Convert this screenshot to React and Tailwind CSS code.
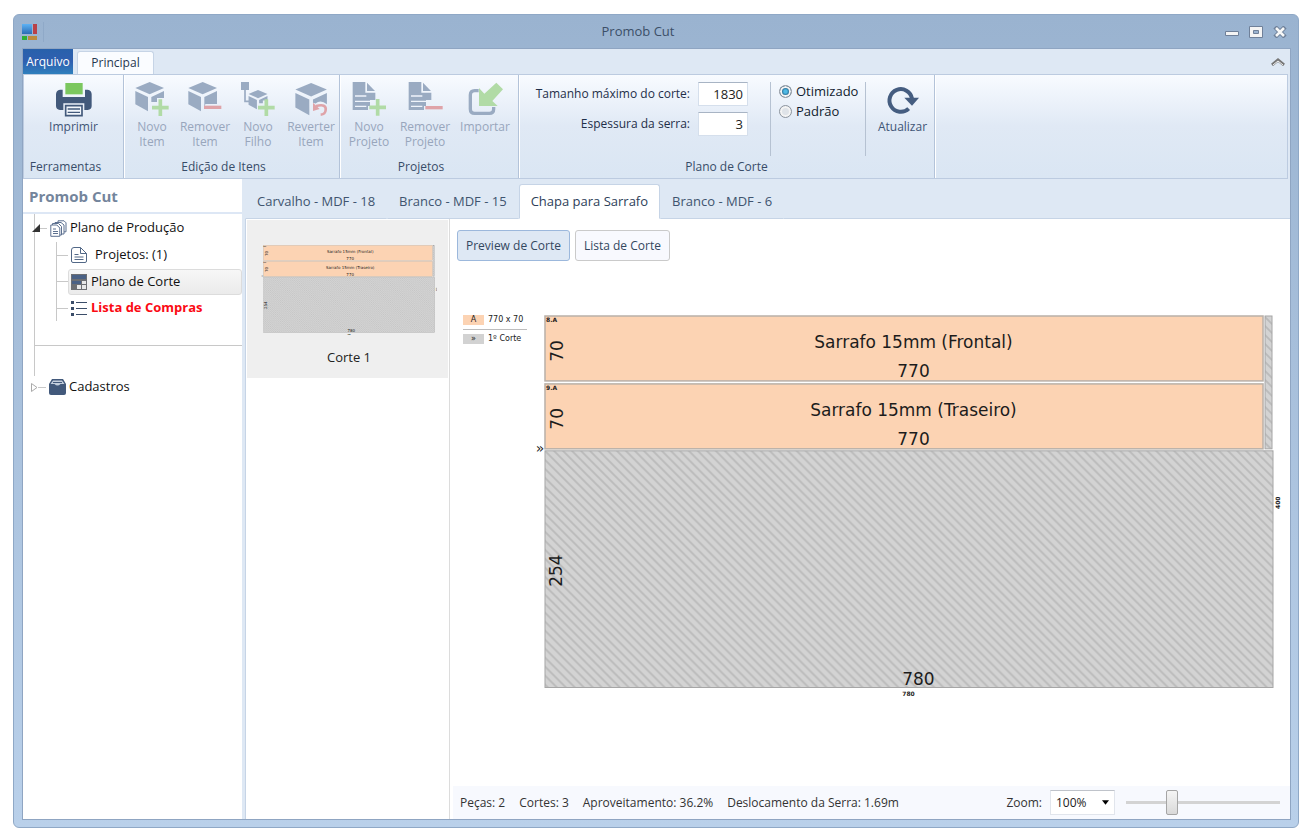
import { useId, useState } from "react";

function Plus({ x, y, size = 50 }) {
  const r = size / 2;
  return (
    <path
      d={`M${x - r} ${y}h${size}M${x} ${y - r}v${size}`}
      stroke="#b1dba6"
      strokeWidth="11"
      fill="none"
    />
  );
}

function Cube({ x = 0, y = 0, scale = 1, cut }) {
  return (
    <g transform={`translate(${x} ${y}) scale(${scale})`} fill="#9aabc2">
      <path d="M44 0 87 18 44 37 1 18Z" />
      <path d="M1 27 39 45V88L1 67Z" />
      <path d={cut || "M49 45 87 27V48H66V60H49Z"} />
    </g>
  );
}

function Icon({ children, className = "h-[35px] w-[35px]", viewBox = "0 0 105 105" }) {
  return (
    <svg className={`shrink-0 ${className}`} viewBox={viewBox} aria-hidden="true">
      {children}
    </svg>
  );
}

const PrintIcon = () => (
  <Icon className="h-[35px] w-9" viewBox="0 0 108 105">
    <path d="M12 23h8v22h67V23h8q12 2 12 14v35q0 11-12 12H85V64H22v20H12Q0 83 0 72V37Q0 25 12 23Z" fill="#42597b" />
    <path d="M28 3h52v34H28Z" fill="#7bc75f" />
    <path d="M29 71h49v30H29Z" fill="#f3f7fc" stroke="#42597b" strokeWidth="5" />
    <path d="M35 81h37M35 91h37" stroke="#42597b" strokeWidth="4" />
  </Icon>
);

const NewItemIcon = () => (
  <Icon>
    <Cube />
    <Plus x={76} y={77} />
  </Icon>
);

const RemoveItemIcon = () => (
  <Icon>
    <Cube cut="M49 45 87 27V66H52L49 80Z" />
    <path d="M48 76h52" stroke="#dfa3a8" strokeWidth="10" />
  </Icon>
);

const NewChildIcon = () => (
  <Icon>
    <path d="M0 0h24v24H0Z" fill="#9aabc2" />
    <path d="M12 20v38h12" stroke="#9aabc2" strokeWidth="5" fill="none" />
    <Cube x={22} y={24} scale={0.66} />
    <Plus x={76} y={77} />
  </Icon>
);

const RevertItemIcon = () => (
  <Icon>
    <Cube x={3} y={3} scale={1.1} cut="M49 45 87 27V58Q70 44 56 56L49 54Z" />
    <path d="M66 72Q98 64 95 84 94 97 80 98" stroke="#dfa3a8" strokeWidth="8" fill="none" />
    <path d="M57 62v25l20-6Z" fill="#dfa3a8" />
  </Icon>
);

const Sheet = () => (
  <>
    <path d="M2 0h38v32h30v22H54v18H48v12H2Z" fill="#9aabc2" />
    <path d="M45 2 69 27H45Z" fill="#9aabc2" />
    <path d="M9 42h34M9 58h50M9 73h34" stroke="#eff4fb" strokeWidth="4" />
  </>
);

const NewProjectIcon = () => (
  <Icon>
    <Sheet />
    <Plus x={77} y={76} />
  </Icon>
);

const RemoveProjectIcon = () => (
  <Icon>
    <Sheet />
    <path d="M52 77h52" stroke="#dfa3a8" strokeWidth="10" />
  </Icon>
);

const ImportIcon = () => (
  <Icon>
    <path d="M32 26H20Q7 26 7 39v42q0 13 13 13h44q13 0 13-13v-6" stroke="#9aabc2" strokeWidth="10" fill="none" />
    <path d="M33 18v54h56L73 57l32-35L85 2 49 35Z" fill="#b1dba6" />
  </Icon>
);

const RefreshIcon = () => (
  <Icon>
    <path d="M71 80A34 34 0 1 1 81 50" stroke="#455d80" strokeWidth="12" fill="none" />
    <path d="M58 47h44L81 71Z" fill="#455d80" />
  </Icon>
);

function RibbonButton({ icon, label, disabled, width }) {
  return (
    <button
      type="button"
      disabled={disabled}
      className={`flex flex-col items-center gap-[2px] text-[12px] leading-[15px] ${width} ${
        disabled ? "text-[#98a6bc]" : "text-[#3f5575]"
      }`}
    >
      {icon}
      <span>{label}</span>
    </button>
  );
}

function RibbonGroup({ title, titleClass = "pr-4", width, children }) {
  return (
    <section className={`flex flex-col border-r border-[#b3c3d9] shadow-[1px_0_0_#fff] ${width}`}>
      <div className="flex flex-1 justify-center pt-[7px]">{children}</div>
      <h2 className={`pb-[2px] text-center text-[12px] leading-[18px] text-[#384c68] ${titleClass}`}>{title}</h2>
    </section>
  );
}

function Ribbon() {
  const [mode, setMode] = useState("otimizado");

  return (
    <div className="mr-[2px] flex h-[105px] border border-[#bccbe0] bg-linear-to-b from-[#f8fbff] via-[#e0e9f5] to-[#dae6f3]">
      <RibbonGroup title="Ferramentas" width="w-[100px]">
        <RibbonButton icon={<PrintIcon />} label="Imprimir" width="w-16" />
      </RibbonGroup>
      <RibbonGroup title="Edição de Itens" width="w-[216px]">
        <RibbonButton disabled icon={<NewItemIcon />} label={<>Novo<br />Item</>} width="w-[53px]" />
        <RibbonButton disabled icon={<RemoveItemIcon />} label={<>Remover<br />Item</>} width="w-[53px]" />
        <RibbonButton disabled icon={<NewChildIcon />} label={<>Novo<br />Filho</>} width="w-[53px]" />
        <RibbonButton disabled icon={<RevertItemIcon />} label={<>Reverter<br />Item</>} width="w-[53px]" />
      </RibbonGroup>
      <RibbonGroup title="Projetos" width="w-[179px]">
        <RibbonButton disabled icon={<NewProjectIcon />} label={<>Novo<br />Projeto</>} width="w-14" />
        <RibbonButton disabled icon={<RemoveProjectIcon />} label={<>Remover<br />Projeto</>} width="w-14" />
        <RibbonButton disabled icon={<ImportIcon />} label="Importar" width="w-16" />
      </RibbonGroup>
      <RibbonGroup title="Plano de Corte" titleClass="" width="w-[416px]">
        <div className="grid flex-1 grid-cols-[1fr_50px] content-start items-center gap-x-2 gap-y-[6px] text-right text-[#1f2f49]">
          <label htmlFor="max-cut" className="text-[12px] whitespace-nowrap">Tamanho máximo do corte:</label>
          <input id="max-cut" defaultValue="1830" className="h-6 border border-[#d5dfec] border-t-[#a8b4c4] bg-white px-1 text-right text-[#222]" />
          <label htmlFor="saw" className="text-[12px] whitespace-nowrap">Espessura da serra:</label>
          <input id="saw" defaultValue="3" className="h-6 border border-[#d5dfec] border-t-[#a8b4c4] bg-white px-1 text-right text-[#222]" />
        </div>
        <fieldset className="ml-[22px] flex h-[74px] w-[96px] flex-col gap-[2px] border-x border-[#b6c2d2] pl-2 text-[#111c2e]">
          {["Otimizado", "Padrão"].map((name) => {
            const value = name.toLowerCase();
            return (
              <label key={value} className="flex items-center gap-1 leading-[18px]">
                <input
                  type="radio"
                  name="mode"
                  checked={mode === value}
                  onChange={() => setMode(value)}
                  className="h-[13px] w-[13px] shrink-0 appearance-none rounded-full border border-[#8d959f] bg-[#dfe3e8] shadow-[inset_0_0_0_2px_#f4f4f4] checked:bg-radial checked:from-[#4fb9e4] checked:from-20% checked:to-[#174a70] checked:to-60%"
                />
                {name}
              </label>
            );
          })}
        </fieldset>
        <RibbonButton icon={<RefreshIcon />} label="Atualizar" width="w-[68px] pl-[5px]" />
      </RibbonGroup>
    </div>
  );
}

function TitleBar() {
  return (
    <header className="flex h-[33px] items-center px-2 text-[#3c4f68]">
      <div className="flex flex-1 items-center gap-[5px]">
        <svg className="h-4 w-4" viewBox="0 0 16 16" aria-hidden="true">
          <defs>
            <linearGradient id="logo" x2="0" y2="1">
              <stop stopColor="#5db2f5" />
              <stop offset="1" stopColor="#2b6cb4" />
            </linearGradient>
          </defs>
          <path d="M0 0h10v10H0Z" fill="url(#logo)" />
          <path d="M11 0h4v10h-4Z" fill="#b94148" />
          <path d="M0 12h5v4H0Z" fill="#2fae37" />
          <path d="M6 12h9v4H6Z" fill="#bd8a3c" />
        </svg>
        <span className="h-5 w-px bg-[#8fa9c8]" />
      </div>
      <h1 className="mr-9">Promob Cut</h1>
      <div className="flex flex-1 items-center justify-end gap-[10px]">
        <button type="button" aria-label="Minimizar">
          <svg className="h-3 w-[14px]" viewBox="0 0 14 12">
            <path d="M.5 5.500h13v4H.5Z" fill="#f4f4f4" stroke="#6f8099" />
          </svg>
        </button>
        <button type="button" aria-label="Maximizar">
          <svg className="h-3 w-[14px]" viewBox="0 0 14 12">
            <path d="M.5.5h13v11H.5Z" fill="#f4f4f4" stroke="#6f8099" />
            <path d="M4.500 4.500h5v3h-5Z" fill="#9ab3d0" stroke="#6f8099" />
          </svg>
        </button>
        <button type="button" aria-label="Fechar" className="mr-[3px]">
          <svg className="h-3 w-[14px]" viewBox="0 0 14 12">
            <path d="m2 1 10 10M12 1 2 11" stroke="#6f8099" strokeWidth="4.500" />
            <path d="m3 2 8 8M11 2 3 10" stroke="#f7f7f7" strokeWidth="2.500" />
          </svg>
        </button>
      </div>
    </header>
  );
}

function SideTree() {
  return (
    <aside className="flex w-[219px] shrink-0 flex-col bg-white text-[#111]">
      <h2 className="border-b-2 border-[#dde7f5] pt-[4px] pb-[3px] pl-[6px] text-[15px] leading-[26px] font-bold text-[#74859c]">
        Promob Cut
      </h2>
      <nav className="pl-[11px]">
        <ul className="border-l border-[#c8c8c8]">
          <li>
            <a href="#producao" className="-ml-[3px] flex h-7 items-center">
              <svg className="h-2 w-2" viewBox="0 0 8 8" aria-hidden="true">
                <path d="M8 0v8H0Z" fill="#333" />
              </svg>
              <span className="w-[7px] border-t border-[#c8c8c8]" />
              <svg className="mx-[3px] h-[17px] w-[17px]" viewBox="0 0 17 17" fill="#fff" stroke="#5d7190" aria-hidden="true">
                <path d="M8 .8h6l2 2v9H8Z" />
                <path d="M5 2.500h6l3 2.500v9H5Z" />
                <path d="M2.500 3.500h6l3 3v8.500h-9Z" />
                <path d="M.8 5h6l3 3v8.300h-9ZM3 9h3M3 11.500h5M3 13.500h5" />
              </svg>
              Plano de Produção
            </a>
            <ul className="ml-[21px] border-l border-[#c8c8c8]">
              <li className="flex h-[26px] items-center">
                <span className="w-[11px] border-t border-[#c8c8c8]" />
                <a href="#projetos" className="flex flex-1 items-center gap-2 pl-[3px]">
                  <svg className="h-4 w-4" viewBox="0 0 16 16" fill="none" stroke="#526887" aria-hidden="true">
                    <path d="M3 .5h6.500l6 6V14q0 1.500-1.500 1.500H2Q.5 15.500.5 14V3Q.5.5 3 .5ZM9.500.5v6h6M3.500 7.500h4M3.500 10h9M3.500 12.500h9" />
                  </svg>
                  Projetos: (1)
                </a>
              </li>
              <li className="flex h-[27px] items-center">
                <span className="w-[11px] border-t border-[#c8c8c8]" />
                <a
                  href="#plano"
                  aria-current="page"
                  className="flex h-[26px] flex-1 items-center gap-1 rounded-[3px] border border-[#dcdcdc] bg-linear-to-b from-[#f7f7f7] to-[#ebebeb] pl-[2px]"
                >
                  <svg className="h-4 w-4" viewBox="0 0 16 16" aria-hidden="true">
                    <path d="M0 0h16v16H0Z" fill="#6d6f73" />
                    <path d="M1 1h14v4H1ZM1 7h9v3H1Z" fill="#4a6185" />
                    <path d="M11 7h4v3h-4ZM6 11h4v4H6ZM11 11h4v4h-4Z" fill="#e8e8e8" />
                  </svg>
                  Plano de Corte
                </a>
              </li>
              <li className="flex h-[26px] items-center">
                <span className="w-[11px] border-t border-[#c8c8c8]" />
                <a href="#compras" className="flex flex-1 items-center gap-1 pl-[3px] font-bold text-[#fb0a14]">
                  <svg className="h-4 w-4" viewBox="0 0 16 16" aria-hidden="true">
                    <path d="M0 1h3v3H0ZM0 7h3v3H0ZM0 13h3v3H0Z" fill="#3b4d69" />
                    <path d="M5 2.500h11M5 8.500h11M5 14.500h11" stroke="#3b4d69" />
                  </svg>
                  Lista de Compras
                </a>
              </li>
            </ul>
          </li>
          <li className="mt-[24px] h-[31px] border-t border-[#c8c8c8]" />
        </ul>
        <a href="#cadastros" className="-ml-[3px] flex h-[22px] items-center">
          <svg className="h-[9px] w-[7px]" viewBox="0 0 7 9" aria-hidden="true">
            <path d="M.5.5 6 4.500.5 8.500Z" fill="#fff" stroke="#aaa" />
          </svg>
          <span className="w-2 border-t border-[#c8c8c8]" />
          <svg className="mx-[3px] h-4 w-[17px]" viewBox="0 0 17 16" aria-hidden="true">
            <path d="M3 0h11l3 5v9q0 2-2 2H2q-2 0-2-2V5Z" fill="#42597b" />
            <path d="M4 1.500h9l2.500 3.500h-4q-3 3-6 0h-4Z" fill="#c3cedd" />
            <path d="M4 3.500h9" stroke="#42597b" />
          </svg>
          Cadastros
        </a>
      </nav>
    </aside>
  );
}

const strips = [
  { tag: "8.A", name: "Sarrafo 15mm (Frontal)", y: 1 },
  { tag: "9.A", name: "Sarrafo 15mm (Traseiro)", y: 69 },
];

function CutPlan({ className }) {
  const hatch = useId();

  return (
    <svg
      className={className}
      viewBox="0 0 748 385"
      fontFamily="'DejaVu Sans', Verdana, sans-serif"
      fontSize="17"
      fill="#1c1c1c"
      textAnchor="middle"
    >
      <defs>
        <pattern id={hatch} width="9" height="9" patternUnits="userSpaceOnUse">
          <path d="M0 0h9v9H0Z" fill="#d3d3d3" />
          <path d="M-1-1 10 10M-1 8 1 10M8-1 10 1" stroke="#bababa" strokeWidth="1.800" />
        </pattern>
      </defs>
      {strips.map(({ tag, name, y }) => (
        <g key={tag} transform={`translate(0 ${y})`}>
          <rect x="10" y="0" width="719" height="65" fill="#fcd3b3" stroke="#b9b0a8" strokeWidth="1.500" />
          <text x="11" y="6" fontSize="6" fontWeight="bold" textAnchor="start">{tag}</text>
          <text x="379" y="32">{name}</text>
          <text x="379" y="61">770</text>
          <text transform="translate(28 35) rotate(-90)">70</text>
        </g>
      ))}
      <rect x="731" y="1" width="7" height="133" fill={`url(#${hatch})`} stroke="#a6a6a6" />
      <rect x="10" y="136" width="729" height="237" fill={`url(#${hatch})`} stroke="#a6a6a6" />
      <text x="384" y="370">780</text>
      <text transform="translate(27 256) rotate(-90)">254</text>
      <text x="374" y="382" fontSize="6" fontWeight="bold">780</text>
      <text transform="translate(746 188) rotate(-90)" fontSize="6" fontWeight="bold">400</text>
      <text x="5" y="138" fontSize="14">»</text>
    </svg>
  );
}

function Legend() {
  return (
    <dl className="grid w-16 shrink-0 grid-cols-[21px_1fr] items-center gap-x-1 font-['DejaVu_Sans',Verdana,sans-serif] text-[8px] leading-[10px] whitespace-nowrap text-[#222]">
      <dt className="bg-[#fcd3b3] text-center">A</dt>
      <dd>770 x 70</dd>
      <div className="col-span-2 my-1 border-t border-[#bdbdbd]" />
      <dt className="bg-[#d2d2d2] text-center">»</dt>
      <dd>1º Corte</dd>
    </dl>
  );
}

function StatusBar() {
  return (
    <footer className="flex h-[33px] items-center gap-[14px] bg-[#f7f9fe] pr-[10px] pl-[7px] text-[12px] whitespace-nowrap text-[#333]">
      <span>Peças: 2</span>
      <span>Cortes: 3</span>
      <span>Aproveitamento: 36.2%</span>
      <span>Deslocamento da Serra: 1.69m</span>
      <label htmlFor="zoom" className="ml-auto">Zoom:</label>
      <div className="relative -ml-[6px]">
        <select id="zoom" className="h-[25px] w-[65px] appearance-none border border-[#e1e5ec] border-t-[#bfc3ca] bg-white pl-[5px] text-[#222]">
          <option>100%</option>
        </select>
        <svg className="pointer-events-none absolute top-[10px] right-[6px] h-[5px] w-[7px]" viewBox="0 0 8 5" aria-hidden="true">
          <path d="M0 0h8L4 5Z" fill="#000" />
        </svg>
      </div>
      <input
        type="range"
        aria-label="Zoom"
        min="0"
        max="100"
        defaultValue="28"
        className="-ml-[3px] h-[25px] w-[154px] appearance-none bg-transparent [&::-webkit-slider-runnable-track]:h-[3px] [&::-webkit-slider-runnable-track]:bg-[#d3d3d3] [&::-webkit-slider-thumb]:-mt-[11px] [&::-webkit-slider-thumb]:h-[25px] [&::-webkit-slider-thumb]:w-3 [&::-webkit-slider-thumb]:appearance-none [&::-webkit-slider-thumb]:rounded-[2px] [&::-webkit-slider-thumb]:border [&::-webkit-slider-thumb]:border-[#a5a5a5] [&::-webkit-slider-thumb]:bg-linear-to-b [&::-webkit-slider-thumb]:from-[#f5f5f5] [&::-webkit-slider-thumb]:to-[#d9d9d9]"
      />
    </footer>
  );
}

const sheets = ["Carvalho - MDF - 18", "Branco - MDF - 15", "Chapa para Sarrafo", "Branco - MDF - 6"];

function Workspace() {
  const [sheet, setSheet] = useState("Chapa para Sarrafo");

  return (
    <main className="flex min-w-0 flex-1 flex-col pl-[3px]">
      <div role="tablist" className="flex items-end pt-[5px] text-[#40546f]">
        {sheets.map((name) => (
          <button
            key={name}
            type="button"
            role="tab"
            aria-selected={sheet === name}
            onClick={() => setSheet(name)}
            className={`h-[35px] rounded-t-[3px] border px-[11px] whitespace-nowrap ${
              sheet === name
                ? "border-[#c6d4e6] border-b-white bg-white text-[#2d4059]"
                : "border-transparent border-b-[#c6d4e6]"
            }`}
          >
            {name}
          </button>
        ))}
        <span className="flex-1 self-stretch border-b border-[#c6d4e6]" />
      </div>
      <div className="flex flex-1 border-l border-[#c6d4e6] bg-white">
        <div className="w-[204px] shrink-0 border-r border-[#dcdcdc] pt-px pr-px pl-px">
          <button type="button" className="flex w-full flex-col items-center bg-[#efefef] pt-[25px] pb-[8px] pl-[3px] text-[#222]">
            <CutPlan className="w-[176px]" />
            <span className="mt-[8px] leading-[26px]">Corte 1</span>
          </button>
        </div>
        <section className="flex min-w-0 flex-1 flex-col pl-[3px]">
          <div className="flex gap-[5px] pt-[11px] pl-1 text-[12px] text-[#33475f]">
            <button type="button" className="h-[31px] rounded-[3px] border border-[#9cb8dc] bg-[#dee8f4] px-2">
              Preview de Corte
            </button>
            <button type="button" className="h-[31px] rounded-[3px] border border-[#cacaca] bg-[#f8f9fe] px-2">
              Lista de Corte
            </button>
          </div>
          <div className="mt-[54px] flex flex-1 items-start gap-2 pr-2 pl-[10px]">
            <Legend />
            <CutPlan className="min-w-0 flex-1" />
          </div>
          <StatusBar />
        </section>
      </div>
    </main>
  );
}

export default function App() {
  return (
    <div className="flex min-h-screen bg-white pt-[14px] pr-[6px] pb-[7px] pl-[13px] font-['Open_Sans','Noto_Sans',sans-serif] text-[13px]">
      <div className="flex min-w-0 flex-1 flex-col rounded-[6px] border border-[#8fa8c6] bg-linear-to-b from-[#9ab3d0] to-[#b9d0ea]">
        <TitleBar />
        <div className="mr-[7px] mb-[7px] ml-2 flex flex-1 flex-col border border-[#8fa5c2] bg-[#dee8f4]">
          <div className="flex h-[25px] items-end gap-1">
            <button type="button" className="h-[25px] w-[50px] bg-linear-to-b from-[#2861ab] via-[#2f5fb0] to-[#2f80bd] text-[12px] text-white">
              Arquivo
            </button>
            <button type="button" className="h-[23px] w-[77px] rounded-t-[3px] border border-b-0 border-[#c6d4e6] bg-[#fafcff] text-[12px] text-[#26374f]">
              Principal
            </button>
            <button type="button" aria-label="Recolher" className="mr-[5px] ml-auto self-center">
              <svg className="h-2 w-[14px]" viewBox="0 0 14 8">
                <path d="m1 7 6-5 6 5" stroke="#777" strokeWidth="3" fill="none" />
                <path d="m2 7 5-4 5 4" stroke="#f5f5f5" fill="none" />
              </svg>
            </button>
          </div>
          <Ribbon />
          <div className="flex flex-1">
            <SideTree />
            <Workspace />
          </div>
        </div>
      </div>
    </div>
  );
}
